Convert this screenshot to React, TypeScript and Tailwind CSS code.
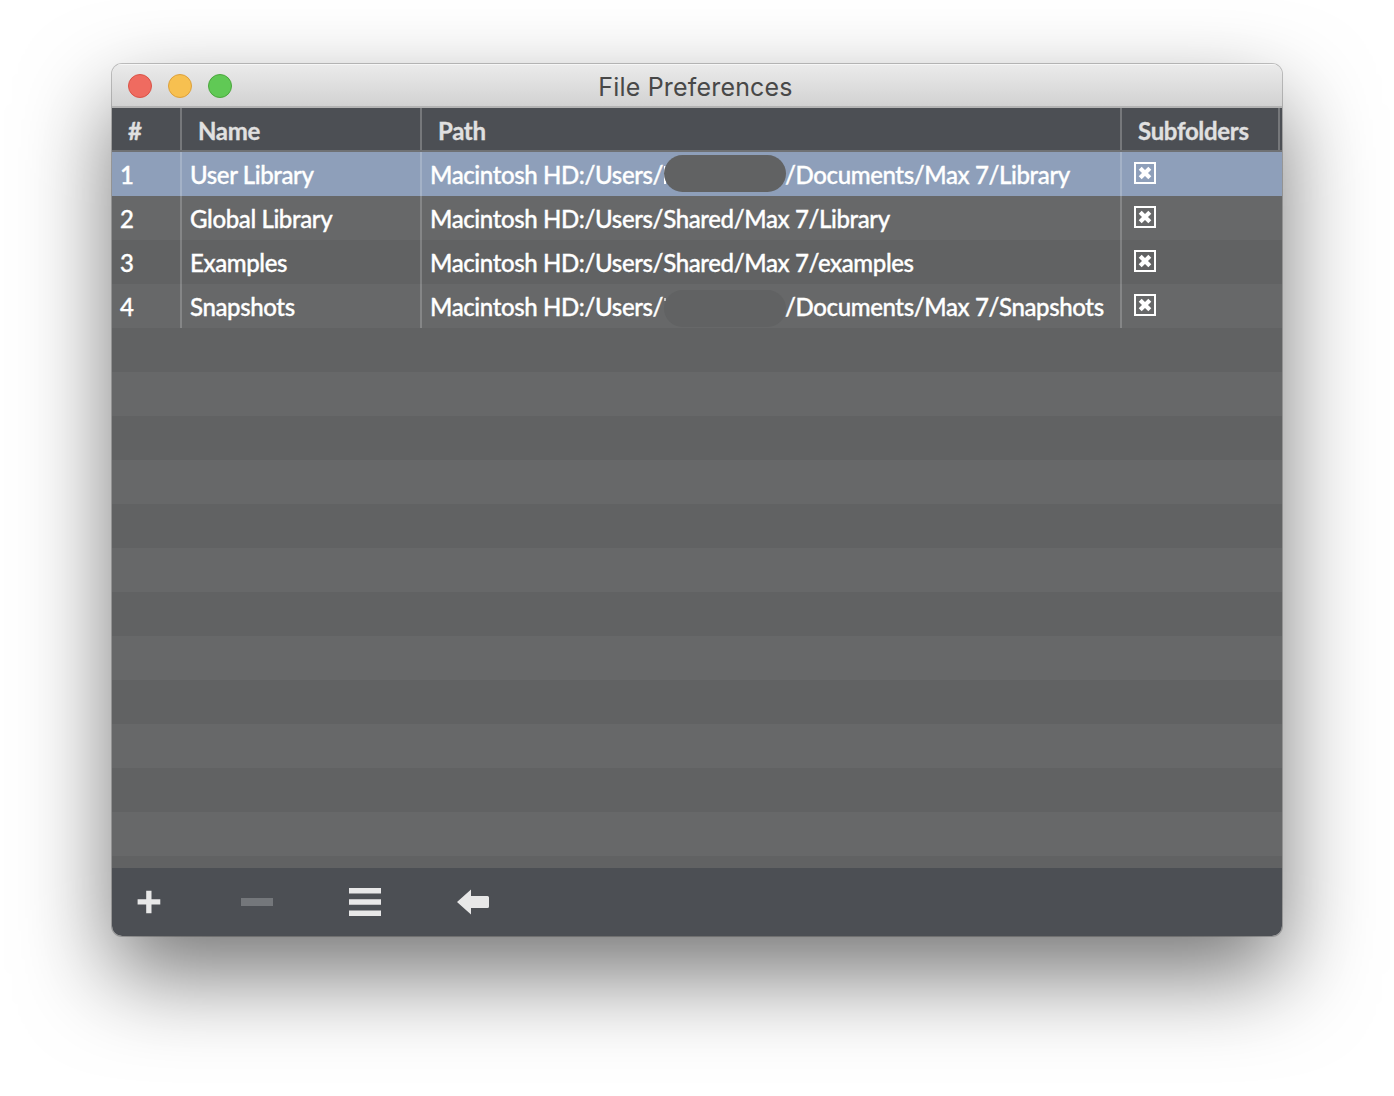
const ROWS = [
  { name: 'User Library', before: 'Macintosh HD:/Users/', after: '/Documents/Max 7/Library', hidden: true, selected: true },
  { name: 'Global Library', before: 'Macintosh HD:/Users/Shared/Max 7/Library' },
  { name: 'Examples', before: 'Macintosh HD:/Users/Shared/Max 7/examples' },
  { name: 'Snapshots', before: 'Macintosh HD:/Users/', after: '/Documents/Max 7/Snapshots', hidden: true },
];

const COLS = 'grid grid-cols-[70px_240px_700px_160px]';

function Checkbox() {
  return (
    <svg width="22" height="22" viewBox="0 0 22 22" className="mt-[10px] ml-3">
      <rect x="1" y="1" width="20" height="20" fill="none" stroke="#fff" strokeWidth="2" />
      <path d="M6.2 6.2 L15.8 15.8 M15.8 6.2 L6.2 15.8" stroke="#fff" strokeWidth="4.2" />
    </svg>
  );
}

function TitleBar() {
  return (
    <div className="grid h-11 shrink-0 grid-cols-[1fr_auto_1fr] items-center border-b-2 border-[#b3b3b3] bg-linear-to-b from-[#ebebeb] to-[#d2d2d2] shadow-[inset_0_1px_0_#f6f6f6]">
      <div className="flex gap-4 pl-4 pt-[2px]">
        <span className="size-6 rounded-full border border-[#d95347] bg-[#ef6b60]" />
        <span className="size-6 rounded-full border border-[#dca03c] bg-[#f7c050]" />
        <span className="size-6 rounded-full border border-[#4ba63d] bg-[#60c955]" />
      </div>
      <h1 className="pr-[3px] pt-1 font-[Inter,sans-serif] text-[25px] leading-8 tracking-[0.18px] text-[#484848]">File Preferences</h1>
    </div>
  );
}

function Toolbar() {
  return (
    <div className="flex h-17 shrink-0 items-center bg-[#4c4f54] pl-5">
      <button className="w-[108px] pl-[5px]">
        <svg width="24" height="24" viewBox="0 0 24 24"><path d="M9.2 .7h5.3v8.6h8.8v5.3h-8.8v8.7H9.2v-8.7H.6V9.3h8.6z" fill="#e8e8e8" /></svg>
      </button>
      <button className="w-[108px] pl-px">
        <svg width="32" height="8" viewBox="0 0 32 8"><path d="M0 0h32v8H0z" fill="#74777b" /></svg>
      </button>
      <button className="w-[108px] pl-px">
        <svg width="32" height="28" viewBox="0 0 32 28"><path d="M0 0h32v5.6H0zM0 11.2h32v5.6H0zM0 22.4h32V28H0z" fill="#e8e8e8" /></svg>
      </button>
      <button className="w-[108px] pl-px">
        <svg width="32" height="26" viewBox="0 0 32 26"><path d="M0 13 14 .4V7h16.5Q32 7 32 8.5v9Q32 19 30.5 19H14v6.6z" fill="#e8e8e8" /></svg>
      </button>
    </div>
  );
}

/* Pill hiding the user name; a sliver of the first letter stays visible at its left edge. */
function Redaction({ selected }: { selected?: boolean }) {
  return (
    <span className={`relative h-[37px] w-[122px] shrink-0 ${selected ? 'mt-[3px]' : 'mt-[6px]'}`}>
      <span className={`absolute left-0 w-[2px] bg-white ${selected ? 'top-[11px] h-[18px]' : '-left-px top-2 h-[3px] opacity-60'}`} />
      <span className="absolute inset-0 rounded-full bg-[#616263]" />
    </span>
  );
}

export default function App() {
  return (
    <main className="h-[1096px] w-[1394px] overflow-hidden bg-white pl-28 pt-16">
      <div className="h-[872px] w-[1170px] rounded-[10px] shadow-[0_0_0_1px_rgba(0,0,0,0.22),0_39px_90px_rgba(0,0,0,0.54)]">
        <div className="flex h-full flex-col overflow-hidden rounded-[10px] font-[Lato,sans-serif] text-[24px]">
          <TitleBar />
          <div className={`${COLS} h-11 shrink-0 grid-rows-[42px] border-b-2 border-[#6f7174] bg-[#4c4f54] font-bold leading-[46px] tracking-[-0.32px] text-[#e0e0e0] [-webkit-text-stroke:0.3px_#e0e0e0]`}>
            <div className="border-r-2 border-[#76787b] pl-4">#</div>
            <div className="border-r-2 border-[#76787b] pl-4">Name</div>
            <div className="border-r-2 border-[#76787b] pl-4">Path</div>
            <div className="mr-[2px] border-r-2 border-[#76787b] pl-4">Subfolders</div>
          </div>
          <div className="min-h-0 flex-1 bg-[repeating-linear-gradient(to_bottom,#616263_0px,#616263_44px,#676869_44px,#676869_88px)] font-medium leading-[46px] tracking-[-0.38px] text-white [-webkit-text-stroke:0.35px_white]">
            {ROWS.map((row, i) => (
              <div key={row.name} className={`${COLS} h-11 grid-rows-[44px] ${row.selected ? 'bg-[#8e9fba]' : ''}`}>
                <div className="border-r-2 border-white/20 pl-2">{i + 1}</div>
                <div className="border-r-2 border-white/20 pl-2">{row.name}</div>
                <div className="flex whitespace-nowrap border-r-2 border-white/20 pl-2">
                  <span className={row.hidden ? 'w-[234px]' : ''}>{row.before}</span>
                  {row.hidden && <Redaction selected={row.selected} />}
                  <span className="-ml-px">{row.after}</span>
                </div>
                <Checkbox />
              </div>
            ))}
          </div>
          <Toolbar />
        </div>
      </div>
    </main>
  );
}
